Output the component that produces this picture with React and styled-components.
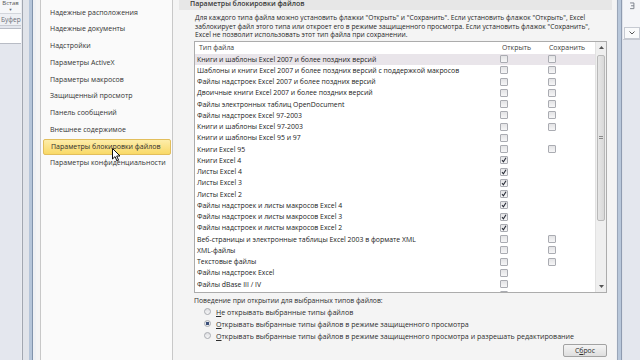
import React from 'react';
import styled, { createGlobalStyle } from 'styled-components';

const GlobalStyle = createGlobalStyle`
  html, body { margin: 0; padding: 0; background: #f3f3f3; }
  body { font-family: "Open Sans", "Noto Sans", sans-serif; }
`;

const Screen = styled.div`
  position: relative;
  width: 640px;
  height: 360px;
  display: flex;
  overflow: hidden;
  font-family: "Open Sans", "Noto Sans", sans-serif;
  color: #2a2a2a;
`;

/* Excel window behind the dialog, left side */
const RibbonEdge = styled.div`
  width: 21px;
  flex: none;
  display: flex;
  flex-direction: column;
  background: #e4e7ee;
`;
const PasteGroup = styled.div`
  height: 13px;
  background: #f6f7f9;
  border-bottom: 1px solid #d3d6dc;
  font-size: 6px;
  line-height: 7px;
  color: #555;
  overflow: hidden;
  display: flex;
  flex-direction: column;
  align-items: center;
  i { font-style: normal; font-size: 4px; line-height: 5px; color: #666; }
`;
const GroupLabel = styled.div`
  height: 11px;
  line-height: 11px;
  font-size: 6.6px;
  color: #6b6f78;
  background: #eef0f4;
  border-bottom: 1px solid #c9ccd3;
  white-space: nowrap;
  overflow: hidden;
  padding-left: 1px;
`;
const NameBox = styled.div`
  height: 14px;
  margin-top: 2px;
  background: #fff;
  border-top: 1px solid #b8bcc5;
  border-bottom: 1px solid #b8bcc5;
`;

const WindowFrame = styled.div`
  width: ${({ w }) => w}px;
  flex: none;
  background: ${({ bg }) => bg};
`;

/* Options dialog */
const Dialog = styled.div`
  flex: 1;
  display: flex;
  background: #f4f4f4;
  min-width: 0;
`;
const Nav = styled.div`
  width: 131px;
  flex: none;
  margin-left: 4px;
  padding-top: 4.6px;
  background: #fafafa;
  border-left: 1px solid #c8c8c8;
  border-right: 1px solid #c8c8c8;
  display: flex;
  flex-direction: column;
`;
const NavItem = styled.div`
  height: 16.75px;
  line-height: 16.75px;
  box-sizing: border-box;
  padding-left: 9px;
  font-size: 7px;
  color: #333;
  white-space: nowrap;
  ${({ active }) => active && `
    margin: 0 1px 0 2px;
    padding-left: 7px;
    line-height: 14.75px;
    border: 1px solid #e2be5c;
    border-radius: 2px;
    background: linear-gradient(#fdedaa, #f9d967);
    color: #2e2e2e;
  `}
`;

const Content = styled.div`
  flex: 1;
  display: flex;
  flex-direction: column;
  min-width: 0;
`;
const SectionHeader = styled.div`
  margin: 0 4px 0 6px;
  height: 10px;
  line-height: 8px;
  padding-left: 11px;
  background: #e7e7e7;
  font-size: 7px;
  font-weight: 600;
  color: #383838;
  white-space: nowrap;
`;
const Body = styled.div`
  display: flex;
  flex-direction: column;
  padding: 0 9px 0 21px;
`;
const Description = styled.div`
  margin-top: 4px;
  font-size: 6.7px;
  line-height: 8.5px;
  color: #262626;
  white-space: nowrap;
  div { padding-left: 1px; }
`;

const Table = styled.div`
  margin-top: 1px;
  height: 252px;
  box-sizing: border-box;
  border: 1px solid #acacac;
  background: #fff;
  display: flex;
  overflow: hidden;
`;
const List = styled.div`
  flex: 1;
  display: flex;
  flex-direction: column;
  overflow: hidden;
`;
const Row = styled.div`
  display: grid;
  grid-template-columns: 305px 48px 48px;
  flex: none;
  height: ${({ head }) => (head ? 12 : 11.25)}px;
  align-items: center;
  font-size: 6.9px;
  color: ${({ head }) => (head ? '#3c3c3c' : '#222')};
  background: ${({ selected }) => (selected ? '#e9e5ea' : 'transparent')};
  white-space: nowrap;
`;
const Cell = styled.div`
  padding-left: ${({ pad }) => pad}px;
  overflow: hidden;
  display: flex;
  align-items: center;
`;
const Box = styled.span`
  width: 8px;
  height: 8px;
  box-sizing: border-box;
  border: 1px solid #aaacb2;
  border-radius: 1px;
  background: linear-gradient(#e3e3e5, #f6f6f7);
  display: flex;
  align-items: center;
  justify-content: center;
`;

const Scrollbar = styled.div`
  width: 10px;
  flex: none;
  display: flex;
  flex-direction: column;
  background: #efefef;
  border-left: 1px solid #e2e2e2;
`;
const ArrowButton = styled.div`
  height: 11px;
  display: flex;
  align-items: center;
  justify-content: center;
`;
const Track = styled.div`
  flex: 1;
  padding-top: 2px;
`;
const Thumb = styled.div`
  height: 166px;
  margin: 0 1px;
  box-sizing: border-box;
  border: 1px solid #b9b9b9;
  border-radius: 2px;
  background: linear-gradient(to right, #e6e6e6, #d9d9d9);
  display: flex;
  align-items: center;
  justify-content: center;
`;
const Grip = styled.div`
  width: 4px;
  height: 4px;
  background: repeating-linear-gradient(#8a8a8a 0 1px, transparent 1px 2px);
`;

const BehaviourLabel = styled.div`
  margin-top: 3px;
  height: 10px;
  line-height: 10px;
  font-size: 6.8px;
  color: #2e2e2e;
  white-space: nowrap;
`;
const RadioRow = styled.div`
  height: 12px;
  display: flex;
  align-items: center;
  padding-left: 10px;
  gap: 5px;
  font-size: 7.1px;
  color: #2e2e2e;
  white-space: nowrap;
  u { text-decoration: underline; text-underline-offset: 1px; }
`;
const Radio = styled.span`
  width: 7px;
  height: 7px;
  box-sizing: border-box;
  border-radius: 50%;
  border: 1px solid #a9abb1;
  background: ${({ on }) =>
    on ? 'radial-gradient(circle, #3b4f7a 0 1.6px, #e9ebee 2px)' : 'linear-gradient(#dedfe2, #f6f6f7)'};
  flex: none;
`;
const ResetButton = styled.div`
  align-self: flex-end;
  margin-top: 2px;
  width: 44px;
  height: 13px;
  box-sizing: border-box;
  border: 1px solid #a2a2a2;
  border-radius: 2px;
  background: linear-gradient(#f4f4f4, #dedede);
  font-size: 6.9px;
  line-height: 11px;
  text-align: center;
  color: #2e2e2e;
  u { text-decoration: underline; }
`;

/* Excel window, right side */
const RibbonRight = styled.div`
  width: 17px;
  flex: none;
  display: flex;
  flex-direction: column;
  background: #e4e7ee;
`;
const RibbonTop = styled.div`
  height: 40px;
  background: #f4f5f8;
  border-bottom: 1px solid #c5c9d1;
  display: flex;
  flex-direction: column;
  align-items: center;
  padding-top: 2px;
  box-sizing: border-box;
`;
const DropBox = styled.div`
  margin-top: 17px;
  width: 14px;
  height: 11px;
  border: 1px solid #c6cad2;
  background: #f9fafb;
  display: flex;
  align-items: center;
  justify-content: center;
`;

const Cursor = styled.svg`
  position: absolute;
  left: 112px;
  top: 148px;
`;

const navItems = [
  'Надежные расположения',
  'Надежные документы',
  'Надстройки',
  'Параметры ActiveX',
  'Параметры макросов',
  'Защищенный просмотр',
  'Панель сообщений',
  'Внешнее содержимое',
  'Параметры блокировки файлов',
  'Параметры конфиденциальности',
];

// [name, open, save, checked]
const fileTypes = [
  ['Книги и шаблоны Excel 2007 и более поздних версий', true, true, false],
  ['Шаблоны и книги Excel 2007 и более поздних версий с поддержкой макросов', true, true, false],
  ['Файлы надстроек Excel 2007 и более поздних версий', true, true, false],
  ['Двоичные книги Excel 2007 и более поздних версий', true, true, false],
  ['Файлы электронных таблиц OpenDocument', true, true, false],
  ['Файлы надстроек Excel 97-2003', true, true, false],
  ['Книги и шаблоны Excel 97-2003', true, true, false],
  ['Книги и шаблоны Excel 95 и 97', true, false, false],
  ['Книги Excel 95', true, true, false],
  ['Книги Excel 4', true, false, true],
  ['Листы Excel 4', true, false, true],
  ['Листы Excel 3', true, false, true],
  ['Листы Excel 2', true, false, true],
  ['Файлы надстроек и листы макросов Excel 4', true, false, true],
  ['Файлы надстроек и листы макросов Excel 3', true, false, true],
  ['Файлы надстроек и листы макросов Excel 2', true, false, true],
  ['Веб-страницы и электронные таблицы Excel 2003 в формате XML', true, true, false],
  ['XML-файлы', true, true, false],
  ['Текстовые файлы', true, true, false],
  ['Файлы надстроек Excel', true, false, false],
  ['Файлы dBase III / IV', true, false, false],
  ['', true, false, false],
];

const Check = () => (
  <svg width="6" height="6" viewBox="0 0 6 6">
    <path d="M1 3.2 L2.4 4.8 L5 0.8" fill="none" stroke="#2b2f3a" strokeWidth="1.1" />
  </svg>
);

const Checkbox = ({ checked }) => <Box>{checked && <Check />}</Box>;

const Arrow = ({ down }) => (
  <svg width="5" height="3" viewBox="0 0 5 3">
    <path d={down ? 'M0 0 H5 L2.5 3 Z' : 'M0 3 H5 L2.5 0 Z'} fill="#555" />
  </svg>
);

export default function App() {
  return (
    <>
      <GlobalStyle />
      <Screen>
        <RibbonEdge>
          <PasteGroup>
            <span>Встав</span>
            <i>▼</i>
          </PasteGroup>
          <GroupLabel>Буфер</GroupLabel>
          <NameBox />
        </RibbonEdge>
        <WindowFrame w={15} bg="linear-gradient(to right, #e9ebf0 0 1px, #a2a7b0 1px 2px, #e1e4ea 2px 8px, #b5c5d9 8px 11px, #8193ab 11px 12px, #eef0f3 12px 15px)" />

        <Dialog>
          <Nav>
            {navItems.map((item, i) => (
              <NavItem key={item} active={i === 8}>{item}</NavItem>
            ))}
          </Nav>

          <Content>
            <SectionHeader>Параметры блокировки файлов</SectionHeader>
            <Body>
              <Description>
                <div>Для каждого типа файла можно установить флажки "Открыть" и "Сохранить". Если установить флажок "Открыть", Excel</div>
                <div>заблокирует файл этого типа или откроет его в режиме защищенного просмотра. Если установить флажок "Сохранить",</div>
                <div>Excel не позволит использовать этот тип файла при сохранении.</div>
              </Description>

              <Table>
                <List>
                  <Row head>
                    <Cell pad={4}>Тип файла</Cell>
                    <Cell pad={2}>Открыть</Cell>
                    <Cell pad={1}>Сохранить</Cell>
                  </Row>
                  {fileTypes.map(([name, open, save, checked], i) => (
                    <Row key={i} selected={i === 0}>
                      <Cell pad={2}>{name}</Cell>
                      <Cell pad={0}>{open && <Checkbox checked={checked} />}</Cell>
                      <Cell pad={0}>{save && <Checkbox />}</Cell>
                    </Row>
                  ))}
                </List>
                <Scrollbar>
                  <ArrowButton><Arrow /></ArrowButton>
                  <Track>
                    <Thumb><Grip /></Thumb>
                  </Track>
                  <ArrowButton><Arrow down /></ArrowButton>
                </Scrollbar>
              </Table>

              <BehaviourLabel>Поведение при открытии для выбранных типов файлов:</BehaviourLabel>
              <RadioRow>
                <Radio />
                <span><u>Н</u>е открывать выбранные типы файлов</span>
              </RadioRow>
              <RadioRow>
                <Radio on />
                <span><u>О</u>ткрывать выбранные типы файлов в режиме защищенного просмотра</span>
              </RadioRow>
              <RadioRow>
                <Radio />
                <span><u>О</u>ткрывать выбранные типы файлов в режиме защищенного просмотра и разрешать редактирование</span>
              </RadioRow>
              <ResetButton>С<u>б</u>рос</ResetButton>
            </Body>
          </Content>
        </Dialog>

        <WindowFrame w={7} bg="linear-gradient(to right, #eef0f3 0 1px, #9aa6b8 1px 2px, #b8c7da 2px 5px, #8e9bb0 5px 6px, #dfe3ea 6px 7px)" />
        <RibbonRight>
          <RibbonTop>
            <svg width="8" height="8" viewBox="0 0 8 8">
              <path d="M2 1 H6 V7 H2 M6 4 H3" fill="none" stroke="#7a7f8a" strokeWidth="1" />
            </svg>
            <DropBox>
              <svg width="6" height="4" viewBox="0 0 6 4">
                <path d="M0.5 0.5 L3 3 L5.5 0.5" fill="none" stroke="#555" strokeWidth="1" />
              </svg>
            </DropBox>
          </RibbonTop>
        </RibbonRight>

        <Cursor width="9" height="14" viewBox="0 0 9 14">
          <path d="M0.5 0.5 V11 L3 8.6 L5 13 L6.6 12.2 L4.7 8 H8 Z" fill="#fff" stroke="#111" strokeWidth="1" />
        </Cursor>
      </Screen>
    </>
  );
}
